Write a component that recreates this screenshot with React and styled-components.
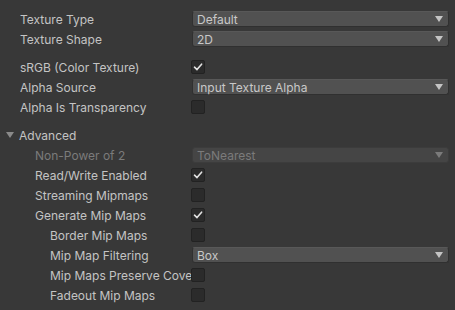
import React from 'react';
import styled, { createGlobalStyle } from 'styled-components';

const GlobalStyle = createGlobalStyle`
    body {
        margin: 0;
        background: #383838;
        font-family: Inter, "Noto Sans", sans-serif;
        font-size: 12px;
        color: #c4c4c4;
    }
`

const Panel = styled.div`
    width: 455px;
    height: 310px;
    padding: 9px 6px 0 0;
    box-sizing: border-box;
    background: #383838;
    overflow: hidden;
`

const Section = styled.div`
    margin-bottom: 8px;
`

const Row = styled.div`
    display: flex;
    align-items: center;
    height: 20px;
    padding-left: 20px;
`

const Label = styled.div`
    flex: 0 0 171px;
    box-sizing: border-box;
    padding-left: ${p => p.indent * 15}px;
    white-space: nowrap;
    overflow: hidden;
    color: ${p => p.disabled ? '#7b7b7b' : '#c4c4c4'};
`

const Foldout = styled.div`
    display: flex;
    align-items: center;
    height: 20px;
    padding-left: 6px;
    gap: 5px;
    color: #c4c4c4;
`

const Arrow = styled.span`
    width: 0;
    height: 0;
    border-left: 4px solid transparent;
    border-right: 4px solid transparent;
    border-top: 6px solid ${p => p.color || '#a0a0a0'};
`

const Popup = styled.div`
    flex: 1;
    margin-left: 1px;
    height: 16px;
    box-sizing: border-box;
    display: flex;
    align-items: center;
    justify-content: space-between;
    padding: 0 5px 0 4px;
    border-radius: 3px;
    background: ${p => p.disabled ? '#454545' : '#515151'};
    border: 1px solid ${p => p.disabled ? '#3c3c3c' : '#303030'};
    border-top-color: ${p => p.disabled ? '#3c3c3c' : '#585858'};
    color: ${p => p.disabled ? '#7b7b7b' : '#c8c8c8'};
`

const Toggle = styled.div`
    width: 14px;
    height: 14px;
    box-sizing: border-box;
    border-radius: 2px;
    background: #2b2b2b;
    border: 1px solid #222;
    display: flex;
    align-items: center;
    justify-content: center;
`

const Check = () => (
    <svg width="10" height="10" viewBox="0 0 10 10">
        <path d="M1.5 5.2 L4 7.6 L8.6 2.2" fill="none" stroke="#e2e2e2" strokeWidth="1.6" strokeLinecap="round" strokeLinejoin="round" />
    </svg>
);

function Field({ label, indent = 0, disabled, popup, toggle, checked }) {
    return (
        <Row>
            <Label indent={indent} disabled={disabled}>{label}</Label>
            {popup !== undefined && (
                <Popup disabled={disabled}>
                    <span>{popup}</span>
                    <Arrow color={disabled ? '#7b7b7b' : '#c4c4c4'} />
                </Popup>
            )}
            {toggle && <Toggle>{checked && <Check />}</Toggle>}
        </Row>
    );
}

export default function App() {
    return (
        <Panel>
            <GlobalStyle />
            <Section>
                <Field label="Texture Type" popup="Default" />
                <Field label="Texture Shape" popup="2D" />
            </Section>
            <Section>
                <Field label="sRGB (Color Texture)" toggle checked />
                <Field label="Alpha Source" popup="Input Texture Alpha" />
                <Field label="Alpha Is Transparency" toggle />
            </Section>
            <Foldout>
                <Arrow color="#8a8a8a" />
                <span>Advanced</span>
            </Foldout>
            <Field label="Non-Power of 2" indent={1} disabled popup="ToNearest" />
            <Field label="Read/Write Enabled" indent={1} toggle checked />
            <Field label="Streaming Mipmaps" indent={1} toggle />
            <Field label="Generate Mip Maps" indent={1} toggle checked />
            <Field label="Border Mip Maps" indent={2} toggle />
            <Field label="Mip Map Filtering" indent={2} popup="Box" />
            <Field label="Mip Maps Preserve Coverage" indent={2} toggle />
            <Field label="Fadeout Mip Maps" indent={2} toggle />
        </Panel>
    );
}
